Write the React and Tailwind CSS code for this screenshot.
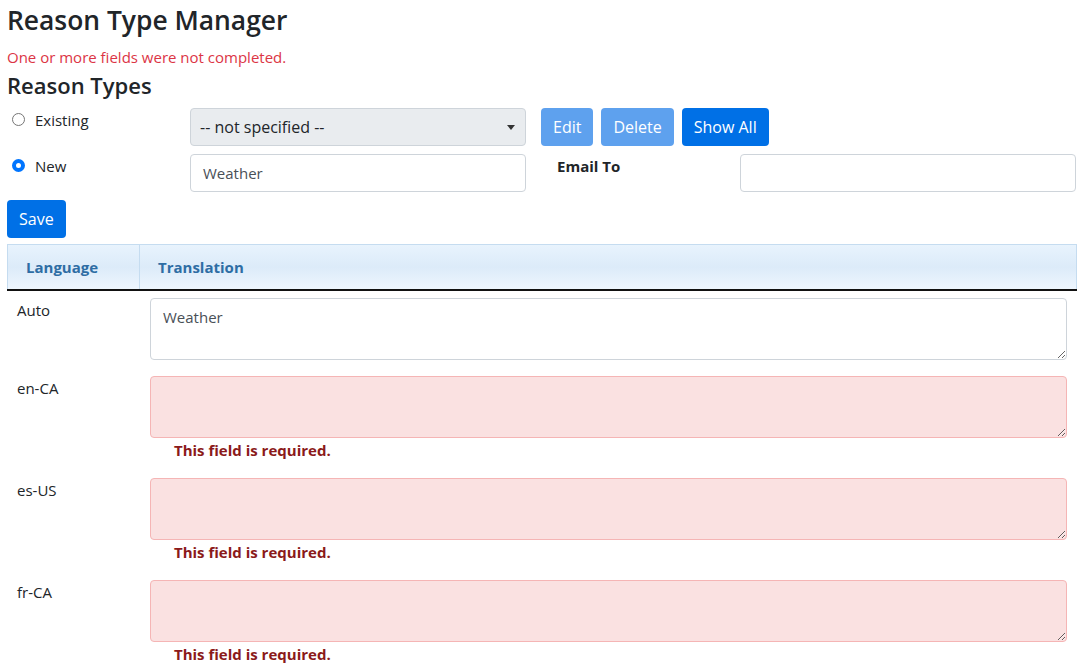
import React from "react";

const langs = [
  { code: "Auto", value: "Weather", error: false },
  { code: "en-CA", value: "", error: true },
  { code: "es-US", value: "", error: true },
  { code: "fr-CA", value: "", error: true },
];

const App = () => {
  return (
    <div
      className="bg-white text-[#212529] px-[7px] pt-[3px] text-[16px] leading-6"
      style={{ fontFamily: '"Open Sans", "Noto Sans", sans-serif' }}
    >
      <h3 className="text-[26.4px] leading-[34px] font-semibold">Reason Type Manager</h3>
      <div className="mt-[8px] text-[15px] leading-6 text-[#dc3545]">
        One or more fields were not completed.
      </div>
      <h4 className="mt-[2px] text-[22px] leading-[28px] font-semibold">Reason Types</h4>

      {/* existing row */}
      <div className="flex mt-[9px]">
        <label className="w-[183px] flex items-start gap-[10px] text-[15px]">
          <span className="mt-[5px] ml-[5px] w-[13px] h-[13px] rounded-full border border-[#767676] bg-white" />
          <span className="leading-6">Existing</span>
        </label>
        <div className="w-[336px] h-[38px] flex items-center justify-between px-[9px] bg-[#e9ecef] border border-[#ced4da] rounded-[4px] text-[16px]">
          <span>-- not specified --</span>
          <svg width="8" height="5" viewBox="0 0 8 5" className="mr-[1px]">
            <path d="M0 0h8L4 5z" fill="#333" />
          </svg>
        </div>
        <div className="flex gap-2 ml-[15px]">
          <button className="h-[38px] px-[12px] rounded-[4px] bg-[#5ea1ee] text-white text-[16px]">Edit</button>
          <button className="h-[38px] px-[12px] rounded-[4px] bg-[#5ea1ee] text-white text-[16px]">Delete</button>
          <button className="h-[38px] px-[12px] rounded-[4px] bg-[#0070e6] text-white text-[16px]">Show All</button>
        </div>
      </div>

      {/* new row */}
      <div className="flex mt-[8px]">
        <label className="w-[183px] flex items-start gap-[10px] text-[15px]">
          <span className="mt-[5px] ml-[5px] w-[13px] h-[13px] rounded-full border-[4px] border-[#0075ff] bg-white" />
          <span className="leading-6">New</span>
        </label>
        <div className="w-[336px] h-[38px] flex items-center px-[12px] bg-white border border-[#ced4da] rounded-[4px] text-[15px] text-[#495057]">
          Weather
        </div>
        <div className="w-[214px] pl-[31px] text-[15px] font-bold">Email To</div>
        <div className="w-[336px] h-[38px] bg-white border border-[#ced4da] rounded-[4px]" />
      </div>

      <button className="mt-[8px] h-[38px] px-[12px] rounded-[4px] bg-[#0070e6] text-white text-[16px]">Save</button>

      {/* table */}
      <div className="mt-[6px] w-[1070px]">
        <div className="flex h-[45px] border border-[#c5dcf0] border-b-0 bg-gradient-to-b from-[#e8f3fd] via-[#dcebf9] to-[#eef6fe] text-[#2e6da4] font-bold text-[15px]">
          <div className="w-[132px] border-r border-[#c5dcf0] pl-[18px] flex items-center">Language</div>
          <div className="flex-1 pl-[18px] flex items-center">Translation</div>
        </div>
        <div className="h-[2px] bg-[#111]" />
        {langs.map((l) => (
          <div key={l.code} className="flex">
            <div className="w-[133px] px-[10px] pt-[7px] text-[15px]">{l.code}</div>
            <div className="flex-1 px-[10px] pt-[7px] pb-[9px]">
              <textarea
                readOnly
                value={l.value}
                className={
                  l.error
                    ? "block w-full h-[62px] rounded-[4px] border border-[#f5b5b5] bg-[#fae1e1] px-[12px] py-[6px] text-[15px]"
                    : "block w-full h-[62px] rounded-[4px] border border-[#ced4da] bg-white px-[12px] py-[6px] text-[15px] text-[#495057]"
                }
              />
              {l.error && (
                <div className="pl-[24px] text-[15px] font-bold text-[#8b1a1a]">This field is required.</div>
              )}
            </div>
          </div>
        ))}
      </div>
    </div>
  );
};

export default App;
